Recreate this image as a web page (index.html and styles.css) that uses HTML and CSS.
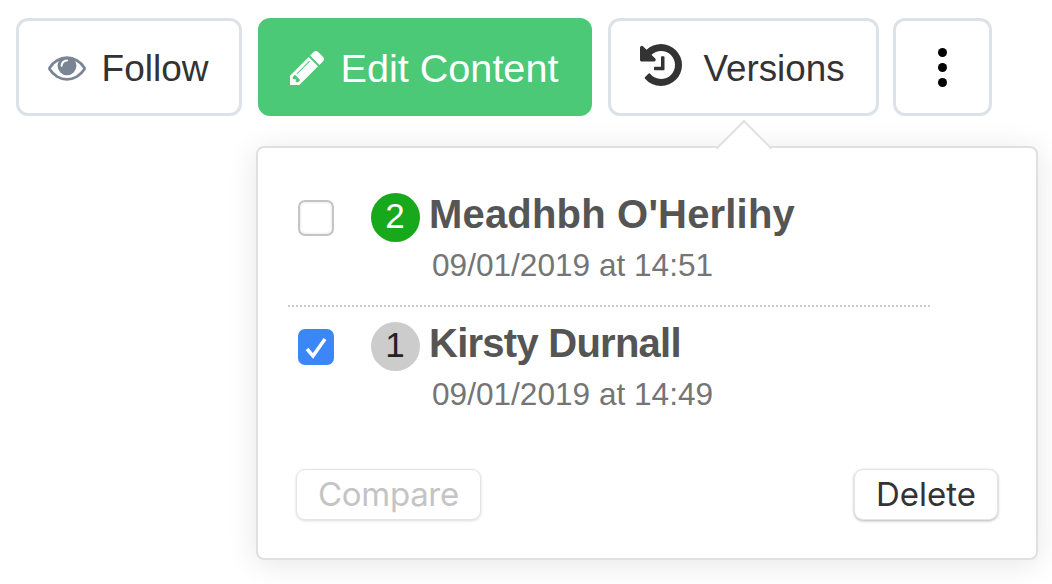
FILE: index.html
```html
<!DOCTYPE html>
<html lang="en">
<head>
    <meta charset="UTF-8">
    <title>Versions</title>
    <link rel="stylesheet" href="styles.css">
</head>
<body>
    <div class="toolbar">
        <button class="btn btn-follow">
            <svg class="icon-eye" viewBox="0 320 1792 1280"><path d="M1664 960q-152-236-381-353 61 104 61 225 0 185-131.500 316.500t-316.500 131.500-316.500-131.500-131.500-316.500q0-121 61-225-229 117-381 353 133 205 333.500 326.500t434.500 121.500 434.500-121.500 333.500-326.500zm-720-384q0-20-14-34t-34-14q-125 0-214.500 89.500t-89.500 214.500q0 20 14 34t34 14 34-14 14-34q0-86 61-147t147-61q20 0 34-14t14-34zm848 384q0 34-20 69-140 230-376.500 368.500t-499.500 138.500-499.500-139-376.500-368q-20-35-20-69t20-69q140-229 376.500-368t499.500-139 499.500 139 376.500 368q20 35 20 69z"/></svg>
            Follow
        </button>
        <button class="btn btn-edit">
            <svg class="icon-pencil" viewBox="128 149 1515 1515"><path d="M491 1536l91-91-235-235-91 91v107h128v128h107zm523-928q0-22-22-22-10 0-17 7l-542 542q-7 7-7 17 0 22 22 22 10 0 17-7l542-542q7-7 7-17zm-54-192l416 416-832 832h-416v-416zm683 96q0 53-37 90l-166 166-416-416 166-165q36-38 90-38 53 0 91 38l235 234q37 39 37 91z"/></svg>
            Edit Content
        </button>
        <button class="btn btn-versions">
            <svg class="icon-history" viewBox="128 128 1536 1536"><path d="M1664 896q0 156-61 298t-164 245-245 164-298 61q-172 0-327-72.500t-264-204.500q-7-10-6.500-22.500t8.500-20.500l137-138q10-9 25-9 16 2 23 12 73 95 179 147t225 52q104 0 198.500-40.500t163.500-109.500 109.500-163.500 40.500-198.500-40.500-198.500-109.500-163.500-163.500-109.500-198.500-40.500q-98 0-188 35.500t-160 101.500l137 138q31 30 14 69-17 40-59 40h-448q-26 0-45-19t-19-45v-448q0-42 40-59 39-17 69 14l130 129q107-101 244.500-156.500t284.500-55.500q156 0 298 61t245 164 164 245 61 298zm-640-288v448q0 14-9 23t-23 9h-320q-14 0-23-9t-9-23v-64q0-14 9-23t23-9h224v-352q0-14 9-23t23-9h64q14 0 23 9t9 23z"/></svg>
            Versions
        </button>
        <button class="btn btn-more">
            <span class="dot"></span>
            <span class="dot"></span>
            <span class="dot"></span>
        </button>
    </div>

    <div class="popover">
        <div class="version-list">
            <div class="version first">
                <span class="check"></span>
                <span class="badge badge-current">2</span>
                <div class="info">
                    <div class="name name-wide">Meadhbh O'Herlihy</div>
                    <div class="date">09/01/2019 at 14:51</div>
                </div>
            </div>
            <div class="version">
                <span class="check checked">
                    <svg viewBox="2 2 32 32"><path d="M9 20l6 7L27 10"/></svg>
                </span>
                <span class="badge">1</span>
                <div class="info">
                    <div class="name name-tight">Kirsty Durnall</div>
                    <div class="date">09/01/2019 at 14:49</div>
                </div>
            </div>
        </div>
        <div class="actions">
            <button class="small-btn" disabled>Compare</button>
            <button class="small-btn">Delete</button>
        </div>
    </div>
</body>
</html>
```

FILE: styles.css
```css
/* Basic reset */
* {
    margin: 0;
    padding: 0;
    box-sizing: border-box;
}

body {
    font-family: 'Liberation Sans', Arial, sans-serif;
    color: #333;
    background-color: #fff;
}

/* Top buttons */
.toolbar {
    display: flex;
    gap: 16px;
    padding: 18px 16px 0;
}

.btn {
    display: flex;
    align-items: center;
    justify-content: center;
    height: 98px;
    padding-top: 4px;
    background-color: #fff;
    border: 3px solid #dde2e8;
    border-radius: 12px;
    color: #333;
    font-family: inherit;
    font-size: 37px;
}

.btn-follow {
    width: 226px;
    gap: 16px;
    padding-right: 2px;
}

.btn-follow svg {
    fill: #7a8594;
    margin-top: -2px;
}

.icon-eye {
    width: 38px;
    height: 27px;
}

.btn-edit {
    width: 334px;
    gap: 17px;
    padding-top: 2px;
    padding-right: 2px;
    background-color: #4bc976;
    border-color: #4bc976;
    color: #fff;
    font-size: 39.6px;
}

.btn-edit svg {
    fill: #fff;
}

.icon-pencil {
    width: 34px;
    height: 34px;
}

.btn-versions {
    width: 271px;
    gap: 21px;
    padding-right: 2px;
    font-size: 36.8px;
}

.btn-versions svg {
    fill: #333;
    margin-top: -8px;
}

.icon-history {
    width: 42px;
    height: 42px;
}

.btn-more {
    width: 99px;
    margin-left: -2px;
    padding-top: 1px;
    flex-direction: column;
    gap: 6px;
}

.dot {
    width: 9px;
    height: 9px;
    border-radius: 50%;
    background-color: #000;
}

/* Versions popover */
.popover {
    position: absolute;
    left: 256px;
    top: 146px;
    width: 782px;
    height: 414px;
    padding: 0 38px;
    background-color: #fff;
    border: 2px solid #e0e0e0;
    border-radius: 8px;
    box-shadow: 0 4px 30px rgba(0, 0, 0, 0.1);
}

.popover::before {
    content: "";
    position: absolute;
    left: 466px;
    top: -20px;
    width: 38px;
    height: 38px;
    background-color: #fff;
    border-top: 2px solid #e0e0e0;
    border-left: 2px solid #e0e0e0;
    transform: rotate(45deg);
}

.version-list {
    position: relative;
    width: 642px;
    margin-left: -8px;
    padding-top: 45px;
}

.version {
    display: flex;
    align-items: flex-start;
    padding-left: 10px;
    height: 112px;
}

.version.first {
    height: 114px;
    padding-bottom: 16px;
    margin-bottom: 15px;
    border-bottom: 2px dotted #ccc;
}

.check {
    display: flex;
    align-items: center;
    justify-content: center;
    width: 36px;
    height: 36px;
    margin-top: 7px;
    background-color: #fff;
    border: 2px solid #c4c4c4;
    border-radius: 7px;
    box-shadow: inset 0 0 3px rgba(0, 0, 0, 0.15);
}

.check.checked {
    background-color: #3c87f7;
    border-color: #3c87f7;
    box-shadow: none;
}

.check svg {
    flex: none;
    width: 32px;
    height: 32px;
    fill: none;
    stroke: #fff;
    stroke-width: 3.5;
}

.badge {
    display: flex;
    align-items: center;
    justify-content: center;
    width: 49px;
    height: 49px;
    margin-left: 37px;
    padding: 0 1px 3px 0;
    border-radius: 50%;
    background-color: #ccc;
    color: #222;
    font-size: 35px;
}

.badge-current {
    background-color: #18a81c;
    color: #fff;
}

.info {
    margin: -2px 0 0 9px;
}

.name {
    color: #555;
    font-size: 40px;
    font-weight: bold;
    line-height: 46px;
}

.name-wide {
    letter-spacing: 0.18px;
}

.name-tight {
    letter-spacing: -0.75px;
}

.date {
    margin: 10px 0 0 3px;
    color: #757575;
    font-size: 31.6px;
    line-height: 36px;
}

.actions {
    position: absolute;
    left: 38px;
    right: 38px;
    top: 321px;
    display: flex;
    justify-content: space-between;
}

.small-btn {
    height: 51px;
    padding: 0 21px 2px;
    background-color: #fff;
    border: 1px solid #e4e4e4;
    border-radius: 9px;
    box-shadow: 0 1px 3px rgba(0, 0, 0, 0.3);
    color: #333;
    font-family: Inter, sans-serif;
    font-size: 33px;
}

.small-btn:disabled {
    padding: 0 21px 2px 21px;
    letter-spacing: -0.3px;
    color: #c4c4c4;
    box-shadow: 0 1px 3px rgba(0, 0, 0, 0.14);
}
```
